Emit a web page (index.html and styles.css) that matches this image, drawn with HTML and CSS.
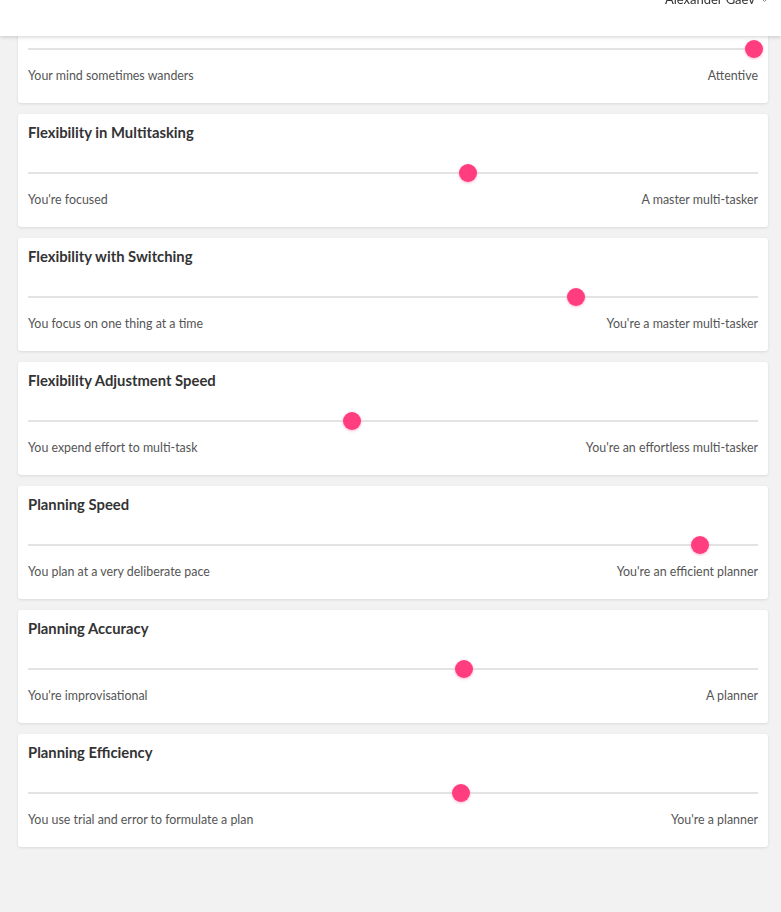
FILE: index.html
```html
<!DOCTYPE html>
<html lang="en">
<head>
    <meta charset="UTF-8">
    <meta name="viewport" content="width=device-width, initial-scale=1.0">
    <title>Cognitive Profile</title>
    <link rel="stylesheet" href="styles.css">
</head>
<body>
    <header class="topbar">
        <div class="user">
            <span>Alexander Gaev</span>
            <svg class="chev" width="9" height="6" viewBox="0 0 9 6"><path d="M1 1l3.5 3.5L8 1" fill="none" stroke="#888" stroke-width="1"/></svg>
        </div>
    </header>

    <main class="list">
        <div class="card">
            <h3 class="title">Attention</h3>
            <div class="slider"><div class="track"></div><div class="thumb" style="left: calc(99.5% - 9px)"></div></div>
            <div class="labels"><span>Your mind sometimes wanders</span><span>Attentive</span></div>
        </div>
        <div class="card">
            <h3 class="title">Flexibility in Multitasking</h3>
            <div class="slider"><div class="track"></div><div class="thumb" style="left: calc(60.3% - 9px)"></div></div>
            <div class="labels"><span>You're focused</span><span>A master multi-tasker</span></div>
        </div>
        <div class="card">
            <h3 class="title">Flexibility with Switching</h3>
            <div class="slider"><div class="track"></div><div class="thumb" style="left: calc(75.1% - 9px)"></div></div>
            <div class="labels"><span>You focus on one thing at a time</span><span>You're a master multi-tasker</span></div>
        </div>
        <div class="card">
            <h3 class="title">Flexibility Adjustment Speed</h3>
            <div class="slider"><div class="track"></div><div class="thumb" style="left: calc(44.4% - 9px)"></div></div>
            <div class="labels"><span>You expend effort to multi-task</span><span>You're an effortless multi-tasker</span></div>
        </div>
        <div class="card">
            <h3 class="title">Planning Speed</h3>
            <div class="slider"><div class="track"></div><div class="thumb" style="left: calc(92.1% - 9px)"></div></div>
            <div class="labels"><span>You plan at a very deliberate pace</span><span>You're an efficient planner</span></div>
        </div>
        <div class="card">
            <h3 class="title">Planning Accuracy</h3>
            <div class="slider"><div class="track"></div><div class="thumb" style="left: calc(59.7% - 9px)"></div></div>
            <div class="labels"><span>You're improvisational</span><span>A planner</span></div>
        </div>
        <div class="card">
            <h3 class="title">Planning Efficiency</h3>
            <div class="slider"><div class="track"></div><div class="thumb" style="left: calc(59.3% - 9px)"></div></div>
            <div class="labels"><span>You use trial and error to formulate a plan</span><span>You're a planner</span></div>
        </div>
    </main>
</body>
</html>
```

FILE: styles.css
```css
body { margin: 0; background-color: #f2f2f2; font-family: Lato, "Open Sans", sans-serif; color: #333; }

.topbar { position: fixed; top: 0; left: 0; right: 0; height: 36px; background: #fff; box-shadow: 0 1px 4px rgba(0, 0, 0, 0.18); z-index: 10; display: flex; justify-content: flex-end; align-items: flex-start; padding-right: 12px; }
.user { display: flex; align-items: center; gap: 5px; margin-top: -10px; font-size: 13px; color: #333; height: 18px; }
.chev { margin-top: 1px; }

.list { display: flex; flex-direction: column; gap: 11px; margin: -10px 13px 0 18px; padding-bottom: 60px; }
.card { background: #fff; border-radius: 3px; box-shadow: 0 1px 3px rgba(0, 0, 0, 0.1); padding: 9px 10px 19px; }
.title { margin: 0 0 23px; height: 18px; line-height: 18px; font-size: 14.8px; font-weight: 700; color: #333; }

.slider { position: relative; height: 18px; }
.track { position: absolute; left: 0; right: 0; top: 8px; height: 2px; background: #e3e3e3; }
.thumb { position: absolute; top: 0; width: 18px; height: 18px; border-radius: 50%; background: #ff3d7f; box-shadow: 0 1px 3px rgba(255, 61, 127, 0.35); }

.labels { display: flex; justify-content: space-between; margin-top: 10px; line-height: 16px; font-size: 12.4px; color: #555; }
```
